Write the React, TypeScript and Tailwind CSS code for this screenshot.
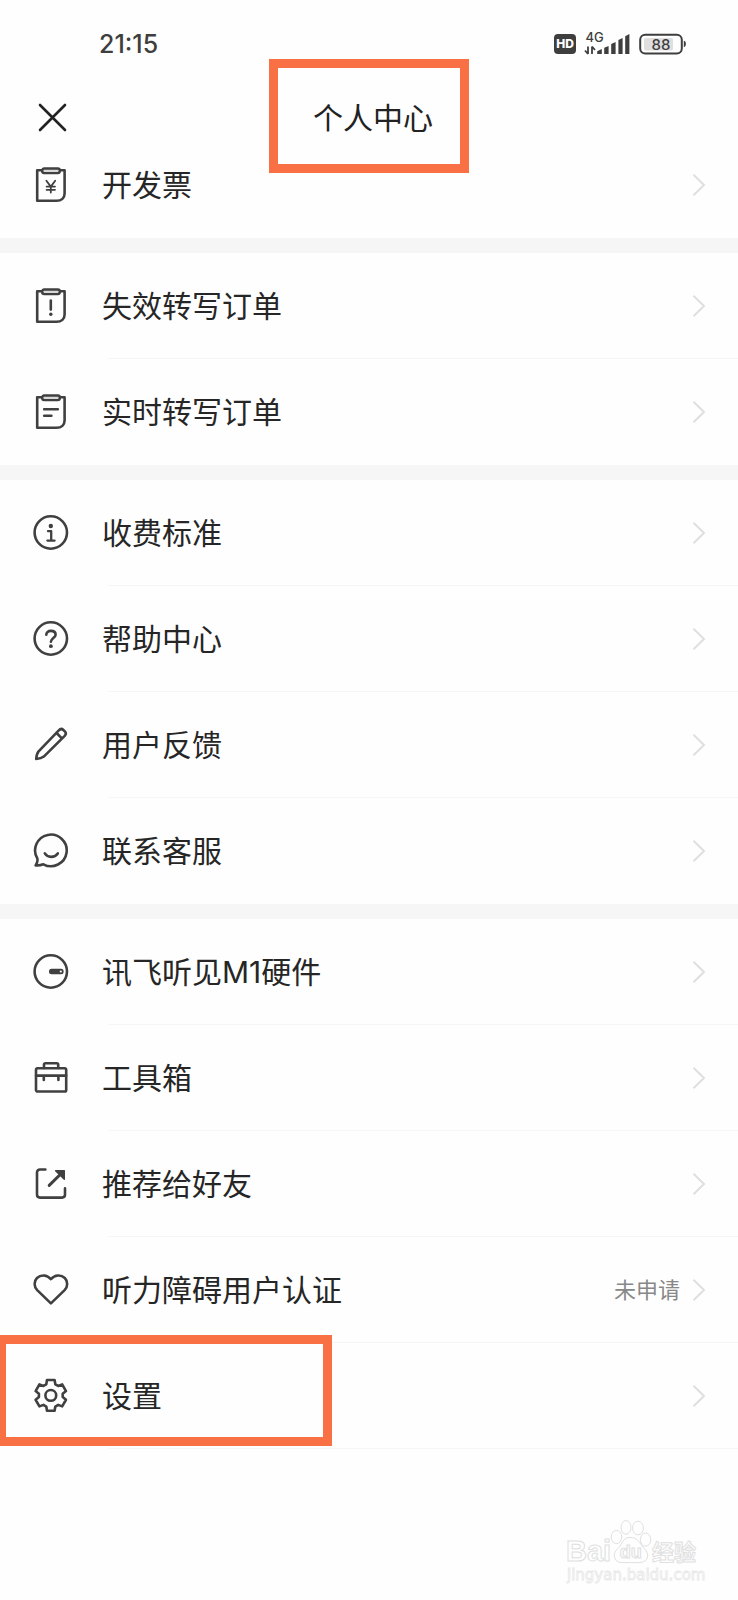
import React from "react";

type IconProps = { children: React.ReactNode };

function Icon({ children }: IconProps) {
  return (
    <svg
      viewBox="0 0 36 36"
      className="h-9 w-9 shrink-0"
      fill="none"
      stroke="#404040"
      strokeWidth="2.6"
      strokeLinecap="round"
      strokeLinejoin="round"
      aria-hidden="true"
    >
      {children}
    </svg>
  );
}

function Clipboard({ children }: IconProps) {
  return (
    <Icon>
      <path d="M8.5 3.2H4.2V33.8H23.5C28.5 33.8 31.6 31 31.6 26.5V3.2H27" />
      <rect x="9.2" y="1.5" width="17.6" height="4.6" rx="2" fill="#d8d8d8" strokeWidth="2.4" />
      {children}
    </Icon>
  );
}

const invoiceIcon = (
  <Clipboard>
    <path d="M13.4 13.8 17.8 19.6 22.2 13.8M17.8 19.6V25.6M13.6 19.6H22M13.6 22.8H22" strokeWidth="1.8" />
  </Clipboard>
);

const alertIcon = (
  <Clipboard>
    <path d="M17.8 12.6V21.6" />
    <circle cx="17.8" cy="26.3" r="1.7" fill="#404040" stroke="none" />
  </Clipboard>
);

const orderIcon = (
  <Clipboard>
    <path d="M11.2 15.3H24.8M11.2 21.7H18.4" />
  </Clipboard>
);

const infoIcon = (
  <Icon>
    <circle cx="17.8" cy="17.5" r="16.2" />
    <circle cx="17.8" cy="11" r="2.2" fill="#404040" stroke="none" />
    <path d="M15 16.2H18.2V25.6M14.4 25.6H21.6" strokeWidth="2.3" />
  </Icon>
);

const helpIcon = (
  <Icon>
    <circle cx="17.8" cy="17.5" r="16.2" />
    <path d="M13.3 13.8C13.3 11.3 15.1 9.9 17.9 9.9S22.6 11.4 22.6 13.7C22.6 17 17.9 17 17.9 20.8" strokeWidth="2.6" />
    <circle cx="17.9" cy="25.2" r="1.9" fill="#404040" stroke="none" />
  </Icon>
);

const pencilIcon = (
  <Icon>
    <path d="M3.2 32C3.4 29 4 26.3 5.6 24.4L25.8 3.3C27.2 1.8 29 1.7 30.4 3L31.8 4.4C33.2 5.8 33 7.5 31.7 8.9L10.8 29.6C8.8 31.2 6 31.8 3.2 32ZM23.6 6 28.8 11.4" />
  </Icon>
);

const chatIcon = (
  <Icon>
    <path d="M4.4 25.6A15.8 15.8 0 1 1 10.4 31.3C8 32.2 5 32.6 2.6 32.4C4 30.4 4.8 28 4.4 25.6Z" />
    <path d="M11.8 20.4C14.6 25 21.6 25 24.8 20.4" />
  </Icon>
);

const deviceIcon = (
  <Icon>
    <circle cx="17.8" cy="17.5" r="16.2" />
    <rect x="16" y="14.8" width="14.6" height="5.4" rx="2.5" fill="#404040" stroke="none" />
    <circle cx="27.8" cy="17.5" r="1.1" fill="#fefefe" stroke="none" />
  </Icon>
);

const toolboxIcon = (
  <Icon>
    <rect x="3" y="8.3" width="30.2" height="23.2" rx="1.6" />
    <path d="M11 8V4.6C11 3.7 11.5 3.2 12.4 3.2H23.8C24.7 3.2 25.2 3.7 25.2 4.6V8M3 15.6H33.2M10.8 15.6V20M25.4 15.6V20" />
  </Icon>
);

const shareIcon = (
  <Icon>
    <path d="M12.4 3.5H7C5 3.5 4 4.6 4 6.5V28.5C4 30.5 5 31.6 7 31.6H29C31 31.6 32 30.5 32 28.5V22.4" />
    <path d="M16.2 19.4 28 7.8" strokeWidth="3" />
    <path d="M22.6 4.7H31.3V13.2Z" fill="#404040" strokeWidth="1.4" />
  </Icon>
);

const heartIcon = (
  <Icon>
    <path d="M17.9 31.4 4.2 18.1C.8 14.6.8 9.2 4 6C7.8 2.4 14 2.5 17.9 7.1C21.8 2.5 28 2.4 31.8 6C35 9.2 35 14.6 31.6 18.1Z" />
  </Icon>
);

const gearPoints = Array.from({ length: 6 }, (_, tooth) =>
  [
    [-22, 12],
    [-14, 15.8],
    [14, 15.8],
    [22, 12],
  ].map(([offset, radius]) => {
    const angle = ((tooth * 60 + offset - 90) * Math.PI) / 180;
    return `${(17.8 + radius * Math.cos(angle)).toFixed(2)},${(17.4 + radius * Math.sin(angle)).toFixed(2)}`;
  }).join(" ")
).join(" ");

const gearIcon = (
  <Icon>
    <polygon points={gearPoints} />
    <circle cx="17.8" cy="17.4" r="5.4" />
  </Icon>
);

type Item = { label: string; icon: React.ReactNode; note?: string; marked?: boolean };

const groups: Item[][] = [
  [{ label: "开发票", icon: invoiceIcon }],
  [
    { label: "失效转写订单", icon: alertIcon },
    { label: "实时转写订单", icon: orderIcon },
  ],
  [
    { label: "收费标准", icon: infoIcon },
    { label: "帮助中心", icon: helpIcon },
    { label: "用户反馈", icon: pencilIcon },
    { label: "联系客服", icon: chatIcon },
  ],
  [
    { label: "讯飞听见M1硬件", icon: deviceIcon },
    { label: "工具箱", icon: toolboxIcon },
    { label: "推荐给好友", icon: shareIcon },
    { label: "听力障碍用户认证", icon: heartIcon, note: "未申请" },
    { label: "设置", icon: gearIcon, marked: true },
  ],
];

function Row({ item, divider }: { item: Item; divider: boolean }) {
  return (
    <li className="relative">
      <a href="#" className="flex h-[106px] items-center pl-[33px]">
        {item.icon}
        <span className="ml-[33px] flex-1 text-[30px] leading-[42px] text-[#262626]">{item.label}</span>
        {item.note && <span className="mr-3 text-[22px] leading-8 text-[#888888]">{item.note}</span>}
        <svg viewBox="0 0 14 24" className="mr-8 h-6 w-[14px]" fill="none" stroke="#dfdfdf" strokeWidth="2" aria-hidden="true">
          <path d="M1.5 1.8 12 12 1.5 22.2" />
        </svg>
      </a>
      {divider && <div className="absolute right-0 bottom-0 left-[108px] h-px bg-[#f6f6f6]" />}
      {item.marked && (
        <div className="absolute -top-2 -left-[3px] h-[111px] w-[335px] border-[9px] border-[#f87044]" />
      )}
    </li>
  );
}

function StatusIcons() {
  return (
    <svg viewBox="0 0 134 28" className="h-7 w-[134px]" fill="#3e3e3e" fontFamily="Inter, sans-serif" aria-label="HD 4G 88%">
      <rect x="0" y="4" width="22" height="20" rx="4" />
      <text x="11" y="18.4" fontSize="12" fontWeight="800" fill="#fff" textAnchor="middle">HD</text>
      <text x="31.5" y="12" fontSize="13" fontWeight="500">4G</text>
      <path d="M34 16.5V24M34 24 31 20.5M38 24V16.5M38 16.5 41 20" fill="none" stroke="#3e3e3e" strokeWidth="1.8" />
      <path d="M43.2 24V21.2L47.8 19V24ZM50.2 24V17.8L54.6 16V24ZM57.2 24V14L61.6 12V24ZM64.4 24V10L68.6 8V24ZM71.2 24V6.2L75.4 4V24Z" />
      <rect x="86.2" y="4.8" width="41.6" height="18.6" rx="5" fill="none" stroke="#3e3e3e" strokeWidth="2" />
      <rect x="90" y="8" width="29" height="12.4" rx="2" fill="#dfdfdf" />
      <text x="107" y="19.6" fontSize="15" fontWeight="500" textAnchor="middle">88</text>
      <path d="M129.8 10.8C132.6 11 132.6 17 129.8 17.2Z" />
    </svg>
  );
}

function Watermark() {
  return (
    <div className="flex flex-col" aria-label="Baidu 经验">
      <svg
        viewBox="0 0 140 46"
        className="h-[46px] w-[140px]"
        fill="#fefefe"
        stroke="#e0e0e0"
        strokeWidth="1"
        fontFamily="'Liberation Sans', sans-serif"
      >
        <text x="0" y="41" fontSize="29" fontWeight="700">Bai</text>
        <ellipse cx="50.5" cy="17" rx="5.3" ry="6.6" />
        <ellipse cx="60" cy="7.4" rx="5" ry="6.8" />
        <ellipse cx="72" cy="8" rx="5.4" ry="6.8" />
        <ellipse cx="79.6" cy="19.6" rx="5.2" ry="6.6" />
        <path d="M64 17.5C71 17.5 73 21.5 76 26C79 29.5 82.5 32 81.5 37C80 44 72 42.5 64.5 42.5C57 42.5 50 44 48.5 37C47.5 32 51 29.5 54 26C57 21.5 58 17.5 64 17.5Z" />
        <text x="64.8" y="37.5" fontSize="18" fontWeight="700" textAnchor="middle">du</text>
        <text x="86" y="40" fontSize="22" fontWeight="700" fontFamily="'Noto Sans CJK SC', sans-serif">经验</text>
      </svg>
      <svg viewBox="0 0 140 22" className="h-[22px] w-[140px]" fill="#fefefe" stroke="#e8e8e8" strokeWidth="0.8" fontFamily="'DejaVu Sans', sans-serif">
        <text x="1" y="14" fontSize="15">jingyan.baidu.com</text>
      </svg>
    </div>
  );
}

export default function App() {
  return (
    <div className="flex min-h-screen flex-col bg-[#fefefe] font-[Inter,'Noto_Sans_CJK_SC',sans-serif]">
      <div className="flex h-[88px] items-center justify-between pr-[50px] pl-[99px]">
        <time className="text-[25px] leading-8 font-medium text-[#3e3e3e]">21:15</time>
        <StatusIcons />
      </div>

      <header className="relative z-10 grid h-[60px] grid-cols-[1fr_auto_1fr] items-center">
        <button type="button" aria-label="关闭" className="ml-[37px] h-[30px] w-[30px]">
          <svg viewBox="0 0 30 30" fill="none" stroke="#222222" strokeWidth="2.6" strokeLinecap="round">
            <path d="M3 2 28 27M28 2 3 27" />
          </svg>
        </button>
        <h1 className="relative pl-2 text-[30px] leading-[42px] text-[#222222]">
          个人中心
          <span className="absolute top-1/2 left-1/2 h-[114px] w-[200px] -translate-x-1/2 -translate-y-[59px] border-[9px] border-[#f87044]" />
        </h1>
      </header>

      <main className="-mt-4">
        {groups.map((group, g) => (
          <ul key={g} className={g < groups.length - 1 ? "border-b-[15px] border-[#f6f6f6]" : ""}>
            {group.map((item, i) => (
              <Row key={item.label} item={item} divider={i < group.length - 1 || g === groups.length - 1} />
            ))}
          </ul>
        ))}
      </main>

      <footer className="mt-auto flex justify-end pr-8 pb-3">
        <Watermark />
      </footer>
    </div>
  );
}
